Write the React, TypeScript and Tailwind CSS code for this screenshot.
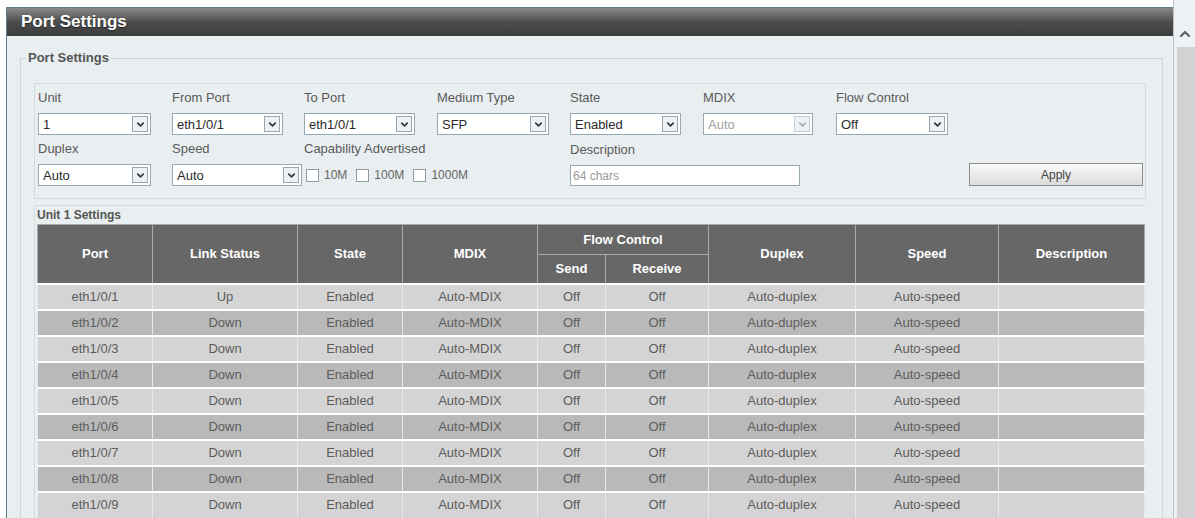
import { ChevronDown, ChevronUp } from "lucide-react";

const rows = Array.from({ length: 9 }, (_, i) => ({
  port: `eth1/0/${i + 1}`,
  link: i === 0 ? "Up" : "Down",
}));

function Select({ value, w, disabled }: { value: string; w: string; disabled?: boolean }) {
  return (
    <div
      className={`flex h-[22px] items-center justify-between border border-[#98a8b2] bg-white pl-[4px] pr-[2px] ${w}`}
    >
      <span className={`text-[13px] leading-none ${disabled ? "text-[#a0a0a0]" : "text-[#2a2a2a]"}`}>{value}</span>
      <span
        className={`flex h-[16px] w-[16px] items-center justify-center border bg-[#eef1f3] ${
          disabled ? "border-[#c4cdd2]" : "border-[#9aa7b0]"
        }`}
      >
        <ChevronDown
          size={11}
          strokeWidth={3.5}
          className={disabled ? "text-[#a8b0b6]" : "text-[#333]"}
        />
      </span>
    </div>
  );
}

function Field({ label, children, w }: { label: string; children: React.ReactNode; w: string }) {
  return (
    <div className={`flex shrink-0 flex-col ${w}`}>
      <div className="flex h-[20px] items-center text-[13px] text-[#5a5a5a]">{label}</div>
      <div className="mt-[5px]">{children}</div>
    </div>
  );
}

function Check({ label }: { label: string }) {
  return (
    <div className="flex items-center">
      <span className="h-[13px] w-[13px] border border-[#8f9aa2] bg-white" />
      <span className="ml-[5px] mr-[9px] text-[12px] text-[#666]">{label}</span>
    </div>
  );
}

const th = "border border-[#a9a9a9] bg-[#676767] text-[13px] font-bold text-white";
const td = "border-x border-[#e8e8e8] text-center text-[13px] text-[#5c5c5c]";

export default function App() {
  return (
    <div
      className="flex h-[518px] w-[1195px] overflow-hidden bg-white"
      style={{ fontFamily: '"Liberation Sans", Arial, sans-serif' }}
    >
      <div className="flex flex-1 flex-col pl-[6px] pt-[7px]">
        <div className="flex flex-1 flex-col overflow-hidden border-l border-t border-[#5d7f88] bg-[#e9eef0]">
          {/* title bar */}
          <div className="flex h-[28px] shrink-0 items-center bg-gradient-to-b from-[#8a8a8a] via-[#4d4d4d] to-[#3c3c3c] pl-[14px]">
            <span className="text-[17px] font-bold text-white [text-shadow:0_1px_1px_#222]">Port Settings</span>
          </div>

          <fieldset className="mx-[13px] mr-[10px] mt-[14px] border border-[#cfd7db] pl-[13px] pr-[16px]">
            <legend className="ml-[-8px] px-[2px] text-[13px] font-bold leading-[16px] text-[#555]">
              Port Settings
            </legend>

            {/* form box */}
            <div className="mt-[17px] border border-[#d3dbdf] pb-[12px] pl-[3px] pr-[2px] pt-[4px]">
              <div className="flex">
                <Field label="Unit" w="w-[134px]">
                  <Select value="1" w="w-[113px]" />
                </Field>
                <Field label="From Port" w="w-[132px]">
                  <Select value="eth1/0/1" w="w-[111px]" />
                </Field>
                <Field label="To Port" w="w-[133px]">
                  <Select value="eth1/0/1" w="w-[111px]" />
                </Field>
                <Field label="Medium Type" w="w-[133px]">
                  <Select value="SFP" w="w-[112px]" />
                </Field>
                <Field label="State" w="w-[133px]">
                  <Select value="Enabled" w="w-[111px]" />
                </Field>
                <Field label="MDIX" w="w-[133px]">
                  <Select value="Auto" w="w-[110px]" disabled />
                </Field>
                <Field label="Flow Control" w="w-[133px]">
                  <Select value="Off" w="w-[112px]" />
                </Field>
              </div>

              <div className="mt-[4px] flex items-end">
                <Field label="Duplex" w="w-[134px]">
                  <Select value="Auto" w="w-[113px]" />
                </Field>
                <Field label="Speed" w="w-[132px]">
                  <Select value="Auto" w="w-[130px]" />
                </Field>
                <Field label="Capability Advertised" w="w-[266px]">
                  <div className="flex h-[22px] items-center pl-[2px]">
                    <Check label="10M" />
                    <Check label="100M" />
                    <Check label="1000M" />
                  </div>
                </Field>
                <Field label="Description" w="w-[232px]">
                  <div className="flex h-[21px] w-[230px] items-center border border-[#98a8b2] bg-white pl-[2px] text-[12px] text-[#9a9a9a]">
                    64 chars
                  </div>
                </Field>
                <div className="flex flex-1 justify-end">
                  <button className="h-[23px] w-[174px] border border-[#8c8c8c] bg-gradient-to-b from-[#fafafa] to-[#dcdcdc] text-[12px] text-[#444]">
                    Apply
                  </button>
                </div>
              </div>
            </div>

            {/* unit settings */}
            <div className="mt-[6px] border-l border-t border-[#d3dbdf] pl-[2px]">
              <div className="flex h-[18px] items-center text-[12px] font-bold text-[#555]">Unit 1 Settings</div>
              <table className="w-[1107px] table-fixed border-collapse">
                <colgroup>
                  <col className="w-[115px]" />
                  <col className="w-[145px]" />
                  <col className="w-[105px]" />
                  <col className="w-[135px]" />
                  <col className="w-[68px]" />
                  <col className="w-[103px]" />
                  <col className="w-[147px]" />
                  <col className="w-[143px]" />
                  <col className="w-[146px]" />
                </colgroup>
                <thead>
                  <tr className="h-[30px]">
                    <th rowSpan={2} className={th}>Port</th>
                    <th rowSpan={2} className={th}>Link Status</th>
                    <th rowSpan={2} className={th}>State</th>
                    <th rowSpan={2} className={th}>MDIX</th>
                    <th colSpan={2} className={th}>Flow Control</th>
                    <th rowSpan={2} className={th}>Duplex</th>
                    <th rowSpan={2} className={th}>Speed</th>
                    <th rowSpan={2} className={th}>Description</th>
                  </tr>
                  <tr className="h-[29px]">
                    <th className={th}>Send</th>
                    <th className={th}>Receive</th>
                  </tr>
                </thead>
                <tbody>
                  {rows.map((r, i) => (
                    <tr
                      key={r.port}
                      className={`h-[26px] border-t-2 border-white ${i % 2 === 0 ? "bg-[#d4d4d4]" : "bg-[#b9b9b9]"}`}
                    >
                      <td className={td}>{r.port}</td>
                      <td className={td}>{r.link}</td>
                      <td className={td}>Enabled</td>
                      <td className={td}>Auto-MDIX</td>
                      <td className={td}>Off</td>
                      <td className={td}>Off</td>
                      <td className={td}>Auto-duplex</td>
                      <td className={td}>Auto-speed</td>
                      <td className={td}></td>
                    </tr>
                  ))}
                </tbody>
              </table>
            </div>
          </fieldset>
        </div>
      </div>

      {/* scrollbar */}
      <div className="flex w-[22px] shrink-0 flex-col border-l border-[#b8c2c7] bg-[#eef2f4] pt-[7px]">
        <div className="flex h-[40px] items-center justify-center pt-[14px]">
          <ChevronUp size={16} strokeWidth={3.5} className="text-[#666]" />
        </div>
        <div className="ml-[3px] flex-1 bg-[#d2d2d2]" />
      </div>
    </div>
  );
}
